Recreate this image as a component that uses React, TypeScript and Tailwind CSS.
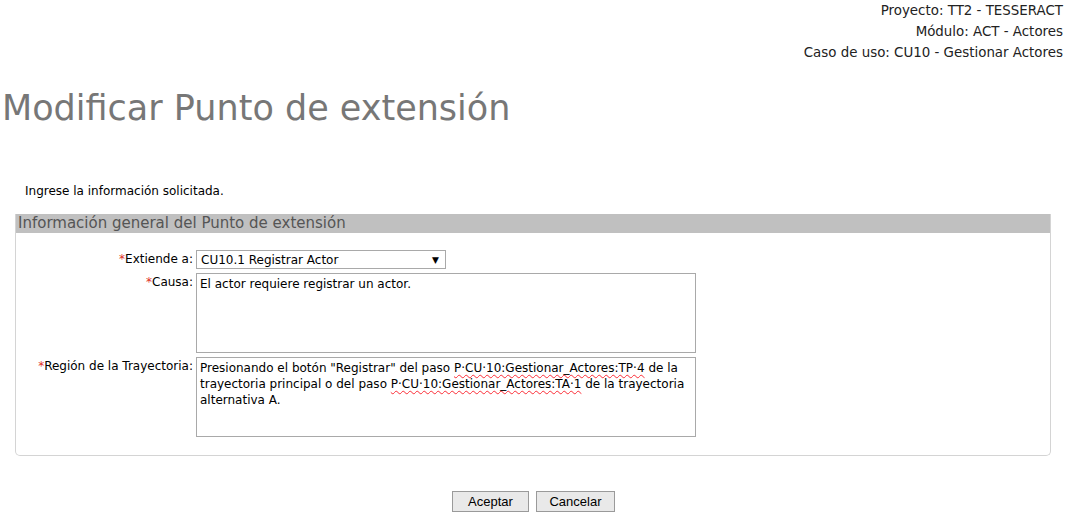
export default function App() {
    return (
        <div className="min-h-[515px] bg-white text-black" style={{fontFamily: '"DejaVu Sans", Verdana, sans-serif'}}>
            <div className="flex flex-col items-end pr-[3px] text-[13.4px] leading-[21px] text-[#222]">
                <p>Proyecto: TT2 - TESSERACT</p>
                <p>Módulo: ACT - Actores</p>
                <p>Caso de uso: CU10 - Gestionar Actores</p>
            </div>
            <h1 className="pl-[2px] pt-[25px] text-[35px] leading-[40px] text-[#777]">Modificar Punto de extensión</h1>
            <p className="pl-[25px] pt-[55px] text-[12px] leading-[16px]">Ingrese la información solicitada.</p>
            <div className="mx-[15px] mt-[15px] rounded-b-[5px] border border-t-0 border-[#d4d4d4] pb-[18px]">
                <div className="h-[19px] bg-[#c0c0c0] pl-[2px] text-[15px] leading-[19px] text-[#555]">Información general del Punto de extensión</div>
                <div className="flex flex-col gap-[4px] pt-[17px] text-[12px] leading-[16px]">
                    <div className="flex items-start">
                        <label className="w-[177px] pt-[1px] text-right"><span className="text-[#e0301e]">*</span>Extiende a:</label>
                        <div className="ml-[3px] flex h-[19px] w-[250px] items-center justify-between border border-[#a9a9a9] pl-[4px] pr-[6px]">
                            <span>CU10.1 Registrar Actor</span>
                            <span className="text-[9px]">▼</span>
                        </div>
                    </div>
                    <div className="flex items-start">
                        <label className="w-[177px] pt-[1px] text-right"><span className="text-[#e0301e]">*</span>Causa:</label>
                        <div className="ml-[3px] h-[80px] w-[500px] border border-[#a9a9a9] px-[3px] py-[2px]">El actor requiere registrar un actor.</div>
                    </div>
                    <div className="flex items-start">
                        <label className="w-[177px] pt-[1px] text-right"><span className="text-[#e0301e]">*</span>Región de la Trayectoria:</label>
                        <p className="ml-[3px] h-[80px] w-[500px] border border-[#a9a9a9] px-[3px] py-[2px]">
                            Presionando el botón "Registrar" del paso <u className="decoration-wavy decoration-red-500 decoration-1 underline-offset-2">P·CU·10:Gestionar_Actores:TP·4</u> de la trayectoria principal o del paso <u className="decoration-wavy decoration-red-500 decoration-1 underline-offset-2">P·CU·10:Gestionar_Actores:TA·1</u> de la trayectoria alternativa A.
                        </p>
                    </div>
                </div>
            </div>
            <div className="flex justify-center gap-[7px] pt-[35px] pl-[1px]" style={{fontFamily: '"Liberation Sans", Arial, sans-serif'}}>
                <button className="h-[21px] w-[77px] border border-[#9a9a9a] bg-[#e9e9e9] text-[13px]">Aceptar</button>
                <button className="h-[21px] w-[79px] border border-[#9a9a9a] bg-[#e9e9e9] text-[13px]">Cancelar</button>
            </div>
        </div>
    )
}
